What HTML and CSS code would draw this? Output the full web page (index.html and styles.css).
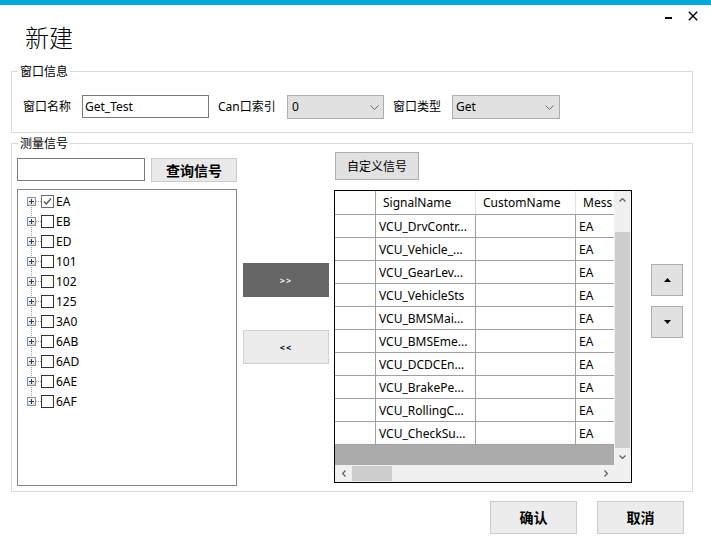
FILE: index.html
```html
<!DOCTYPE html>
<html lang="zh-CN">
<head>
<meta charset="utf-8">
<title>新建</title>
<link rel="stylesheet" href="styles.css">
</head>
<body>
<div class="window">
  <div class="accent"></div>
  <header class="titlebar">
    <h1 class="title">新建</h1>
    <div class="controls">
      <span class="min-btn"></span>
      <svg class="close-btn" width="10" height="10" viewBox="0 0 10 10"><path d="M0.8 0.8L9.2 9.2M9.2 0.8L0.8 9.2" stroke="#000" stroke-width="1.4" fill="none"/></svg>
    </div>
  </header>

  <fieldset class="group">
    <legend>窗口信息</legend>
    <div class="info-row">
      <span class="lbl lbl-name">窗口名称</span>
      <div class="textbox name-box">Get_Test</div>
      <span class="lbl lbl-can">Can口索引</span>
      <div class="combo combo-can"><span>0</span><svg class="chev" width="9" height="5" viewBox="0 0 9 5"><polyline points="0.5,0.5 4.5,4.5 8.5,0.5" fill="none" stroke="#6a6a6a" stroke-width="1"/></svg></div>
      <span class="lbl lbl-type">窗口类型</span>
      <div class="combo combo-type"><span>Get</span><svg class="chev" width="9" height="5" viewBox="0 0 9 5"><polyline points="0.5,0.5 4.5,4.5 8.5,0.5" fill="none" stroke="#6a6a6a" stroke-width="1"/></svg></div>
    </div>
  </fieldset>

  <fieldset class="group">
    <legend>测量信号</legend>
    <div class="sig-body">
      <div class="col-left">
        <div class="search-row">
          <div class="textbox search-box"></div>
          <button class="btn btn-query">查询信号</button>
        </div>
        <div class="tree">
          <div class="node"><span class="branch"><span class="exp"><svg width="5" height="5" viewBox="0 0 5 5"><path d="M0 2.5H5M2.5 0V5" stroke="#23407a" stroke-width="1"/></svg></span></span><span class="hline"></span><span class="chk on"><svg width="11" height="11" viewBox="0 0 11 11"><polyline points="2,5.5 4.3,8 9,2.5" fill="none" stroke="#555" stroke-width="1.3"/></svg></span><span class="node-label">EA</span></div>
          <div class="node"><span class="branch"><span class="exp"><svg width="5" height="5" viewBox="0 0 5 5"><path d="M0 2.5H5M2.5 0V5" stroke="#23407a" stroke-width="1"/></svg></span></span><span class="hline"></span><span class="chk"></span><span class="node-label">EB</span></div>
          <div class="node"><span class="branch"><span class="exp"><svg width="5" height="5" viewBox="0 0 5 5"><path d="M0 2.5H5M2.5 0V5" stroke="#23407a" stroke-width="1"/></svg></span></span><span class="hline"></span><span class="chk"></span><span class="node-label">ED</span></div>
          <div class="node"><span class="branch"><span class="exp"><svg width="5" height="5" viewBox="0 0 5 5"><path d="M0 2.5H5M2.5 0V5" stroke="#23407a" stroke-width="1"/></svg></span></span><span class="hline"></span><span class="chk"></span><span class="node-label">101</span></div>
          <div class="node"><span class="branch"><span class="exp"><svg width="5" height="5" viewBox="0 0 5 5"><path d="M0 2.5H5M2.5 0V5" stroke="#23407a" stroke-width="1"/></svg></span></span><span class="hline"></span><span class="chk"></span><span class="node-label">102</span></div>
          <div class="node"><span class="branch"><span class="exp"><svg width="5" height="5" viewBox="0 0 5 5"><path d="M0 2.5H5M2.5 0V5" stroke="#23407a" stroke-width="1"/></svg></span></span><span class="hline"></span><span class="chk"></span><span class="node-label">125</span></div>
          <div class="node"><span class="branch"><span class="exp"><svg width="5" height="5" viewBox="0 0 5 5"><path d="M0 2.5H5M2.5 0V5" stroke="#23407a" stroke-width="1"/></svg></span></span><span class="hline"></span><span class="chk"></span><span class="node-label">3A0</span></div>
          <div class="node"><span class="branch"><span class="exp"><svg width="5" height="5" viewBox="0 0 5 5"><path d="M0 2.5H5M2.5 0V5" stroke="#23407a" stroke-width="1"/></svg></span></span><span class="hline"></span><span class="chk"></span><span class="node-label">6AB</span></div>
          <div class="node"><span class="branch"><span class="exp"><svg width="5" height="5" viewBox="0 0 5 5"><path d="M0 2.5H5M2.5 0V5" stroke="#23407a" stroke-width="1"/></svg></span></span><span class="hline"></span><span class="chk"></span><span class="node-label">6AD</span></div>
          <div class="node"><span class="branch"><span class="exp"><svg width="5" height="5" viewBox="0 0 5 5"><path d="M0 2.5H5M2.5 0V5" stroke="#23407a" stroke-width="1"/></svg></span></span><span class="hline"></span><span class="chk"></span><span class="node-label">6AE</span></div>
          <div class="node"><span class="branch"><span class="exp"><svg width="5" height="5" viewBox="0 0 5 5"><path d="M0 2.5H5M2.5 0V5" stroke="#23407a" stroke-width="1"/></svg></span></span><span class="hline"></span><span class="chk"></span><span class="node-label">6AF</span></div>
        </div>
      </div>

      <div class="col-move">
        <button class="btn-move btn-add">&gt;&gt;</button>
        <button class="btn-move btn-remove">&lt;&lt;</button>
      </div>

      <div class="col-grid">
        <button class="btn btn-custom">自定义信号</button>
        <div class="grid">
          <div class="grid-view">
            <div class="g-row g-head"><div class="c c-rh"></div><div class="c c-sig">SignalName</div><div class="c c-cus">CustomName</div><div class="c c-msg">Mess</div></div>
            <div class="g-row"><div class="c c-rh"></div><div class="c c-sig">VCU_DrvContr...</div><div class="c c-cus"></div><div class="c c-msg">EA</div></div>
            <div class="g-row"><div class="c c-rh"></div><div class="c c-sig">VCU_Vehicle_...</div><div class="c c-cus"></div><div class="c c-msg">EA</div></div>
            <div class="g-row"><div class="c c-rh"></div><div class="c c-sig">VCU_GearLev...</div><div class="c c-cus"></div><div class="c c-msg">EA</div></div>
            <div class="g-row"><div class="c c-rh"></div><div class="c c-sig">VCU_VehicleSts</div><div class="c c-cus"></div><div class="c c-msg">EA</div></div>
            <div class="g-row"><div class="c c-rh"></div><div class="c c-sig">VCU_BMSMai...</div><div class="c c-cus"></div><div class="c c-msg">EA</div></div>
            <div class="g-row"><div class="c c-rh"></div><div class="c c-sig">VCU_BMSEme...</div><div class="c c-cus"></div><div class="c c-msg">EA</div></div>
            <div class="g-row"><div class="c c-rh"></div><div class="c c-sig">VCU_DCDCEn...</div><div class="c c-cus"></div><div class="c c-msg">EA</div></div>
            <div class="g-row"><div class="c c-rh"></div><div class="c c-sig">VCU_BrakePe...</div><div class="c c-cus"></div><div class="c c-msg">EA</div></div>
            <div class="g-row"><div class="c c-rh"></div><div class="c c-sig">VCU_RollingC...</div><div class="c c-cus"></div><div class="c c-msg">EA</div></div>
            <div class="g-row"><div class="c c-rh"></div><div class="c c-sig">VCU_CheckSu...</div><div class="c c-cus"></div><div class="c c-msg">EA</div></div>
          </div>
          <div class="vscroll">
            <div class="sb-arrow"><svg width="7" height="4" viewBox="0 0 7 4"><polyline points="0.5,3.5 3.5,0.6 6.5,3.5" fill="none" stroke="#606060" stroke-width="1.3"/></svg></div>
            <div class="v-thumb"></div>
            <div class="sb-arrow"><svg width="7" height="4" viewBox="0 0 7 4"><polyline points="0.5,0.5 3.5,3.4 6.5,0.5" fill="none" stroke="#606060" stroke-width="1.3"/></svg></div>
          </div>
          <div class="hscroll">
            <div class="sb-arrow h-arrow"><svg width="4" height="7" viewBox="0 0 4 7"><polyline points="3.5,0.5 0.6,3.5 3.5,6.5" fill="none" stroke="#606060" stroke-width="1.3"/></svg></div>
            <div class="h-thumb"></div>
            <div class="sb-arrow h-arrow h-right"><svg width="4" height="7" viewBox="0 0 4 7"><polyline points="0.5,0.5 3.4,3.5 0.5,6.5" fill="none" stroke="#606060" stroke-width="1.3"/></svg></div>
          </div>
          <div class="corner"></div>
        </div>
      </div>

      <div class="col-order">
        <button class="btn-order"><svg width="7" height="4" viewBox="0 0 7 4"><polygon points="0,4 3.5,0 7,4" fill="#000"/></svg></button>
        <button class="btn-order down"><svg width="7" height="4" viewBox="0 0 7 4"><polygon points="0,0 7,0 3.5,4" fill="#000"/></svg></button>
      </div>
    </div>
  </fieldset>

  <footer class="footer">
    <button class="btn-foot">确认</button>
    <button class="btn-foot">取消</button>
  </footer>
</div>
</body>
</html>
```

FILE: styles.css
```css
* { box-sizing: border-box; }
html, body { margin: 0; padding: 0; background: #fff; }
body {
  width: 711px;
  height: 548px;
  overflow: hidden;
  font-family: "Noto Sans", "Noto Sans CJK SC", sans-serif;
  font-size: 12px;
  color: #000;
}

.accent { height: 5px; background: #00aadc; }

.titlebar {
  display: flex;
  justify-content: space-between;
  align-items: flex-start;
  height: 58px;
}
.title {
  margin: 16px 0 0 25px;
  font-family: "Noto Sans CJK SC", sans-serif;
  font-weight: 300;
  font-size: 24px;
  line-height: 32px;
}
.controls { display: flex; align-items: flex-start; margin-right: 13px; }
.min-btn { width: 7px; height: 2px; background: #000; margin-top: 12px; }
.close-btn { display: block; margin: 6px 0 0 16px; }

/* group boxes */
.group {
  width: 682px;
  margin: 0 0 0 11px;
  padding: 0;
  border: 1px solid #dcdcdc;
  min-inline-size: 0;
}
.group + .group { margin-top: 2px; }
.group legend {
  margin-left: 6px;
  padding: 0 2px;
  font-family: "Noto Sans CJK SC", sans-serif;
  font-size: 12px;
  line-height: 16px;
}

.info-row {
  display: flex;
  align-items: flex-start;
  padding: 16px 0 13px 11px;
}
.lbl { line-height: 24px; white-space: nowrap; }
.lbl-name { width: 59px; }
.lbl-can { width: 69px; margin-left: 9px; }
.lbl-type { width: 59px; margin-left: 9px; }

.textbox {
  height: 23px;
  border: 1px solid #7a7a7a;
  background: #fff;
  padding-left: 2px;
  line-height: 21px;
}
.name-box { width: 127px; }

.combo {
  height: 24px;
  background: #e1e1e1;
  border: 1px solid #adadad;
  display: flex;
  align-items: center;
  justify-content: space-between;
  padding: 0 4px 0 4px;
  line-height: 22px;
}
.combo-can { width: 97px; }
.combo-type { width: 108px; padding-left: 3px; padding-right: 5px; }
.chev { display: block; }

/* signals */
.sig-body {
  display: flex;
  align-items: flex-start;
  padding: 0 0 5px 5px;
}
.col-left { width: 220px; margin-top: 7px; }
.search-row { display: flex; align-items: flex-start; }
.search-box { width: 128px; }

.btn {
  font-family: "Noto Sans CJK SC", sans-serif;
  color: #000;
  margin: 0;
  padding: 0;
}
.btn-query {
  width: 86px;
  height: 24px;
  margin-left: 6px;
  background: #e9e9e9;
  border: 1px solid #cccccc;
  font-size: 14px;
  font-weight: 700;
  line-height: 22px;
}

.tree {
  margin-top: 7px;
  height: 297px;
  border: 1px solid #828790;
  background: #fff;
  padding-top: 1px;
}
.node {
  display: flex;
  align-items: center;
  height: 20px;
  padding-left: 9px;
}
.branch {
  width: 9px;
  height: 20px;
  display: flex;
  align-items: center;
  background: repeating-linear-gradient(to bottom, #a0a0a0 0 1px, transparent 1px 2px) 4px 0 / 1px 20px no-repeat;
}
.node:first-child .branch { background-position: 4px 10px; background-size: 1px 10px; }
.node:last-child .branch { background-size: 1px 10px; }
.exp {
  width: 9px;
  height: 9px;
  border: 1px solid #919191;
  background: linear-gradient(#fdfdfd, #dcdcdc);
  display: flex;
  align-items: center;
  justify-content: center;
}
.exp svg { display: block; }
.hline {
  width: 5px;
  height: 1px;
  background: repeating-linear-gradient(to right, #a0a0a0 0 1px, transparent 1px 2px);
}
.chk {
  width: 13px;
  height: 13px;
  flex: none;
  border: 1px solid #333;
  background: #fff;
  display: flex;
  align-items: center;
  justify-content: center;
}
.chk.on { border-color: #6a6a6a; }
.chk svg { display: block; }
.node-label { margin-left: 2px; line-height: 21px; }

/* move buttons */
.col-move {
  width: 86px;
  margin: 112px 0 0 6px;
  display: flex;
  flex-direction: column;
}
.btn-move {
  height: 34px;
  margin: 0;
  padding: 0;
  border: 0;
  font-family: "Noto Sans", sans-serif;
  font-size: 9px;
  font-weight: 700;
  letter-spacing: 1px;
}
.btn-add { background: #666666; color: #f2f2f2; }
.btn-remove { margin-top: 33px; background: #ececec; border: 1px solid #d0d0d0; color: #000; }

/* grid */
.col-grid { width: 298px; margin-left: 5px; }
.btn-custom {
  display: block;
  width: 84px;
  height: 28px;
  margin: 1px 0 0 1px;
  background: #e1e1e1;
  border: 1px solid #adadad;
  font-size: 12px;
  line-height: 26px;
}
.grid {
  margin-top: 10px;
  height: 293px;
  border: 1px solid #000;
  display: grid;
  grid-template-columns: 279px 17px;
  grid-template-rows: 274px 17px;
  background: #f0f0f0;
}
.grid-view { background: #ababab; overflow: hidden; }
.g-row {
  display: flex;
  height: 23px;
  background: #fff;
  border-bottom: 1px solid #a0a0a0;
}
.g-head { height: 24px; }
.c {
  flex: none;
  overflow: hidden;
  white-space: nowrap;
  padding-left: 3px;
  line-height: 24px;
  border-right: 1px solid #a0a0a0;
}
.c-rh { width: 41px; }
.c-sig, .c-cus { width: 100px; }
.c-msg { width: 60px; border-right: 0; }
.g-head .c { padding-left: 7px; line-height: 24px; border-right-color: #e3e3e3; }
.g-head .c-rh { border-right-color: #a0a0a0; }
.g-head .c-msg { padding-left: 7px; }

.vscroll { display: flex; flex-direction: column; background: #f0f0f0; }
.sb-arrow {
  flex: none;
  height: 17px;
  display: flex;
  align-items: center;
  justify-content: center;
}
.sb-arrow svg { display: block; }
.v-thumb { margin: 24px 0 0 1px; width: 15px; height: 216px; background: #cdcdcd; }
.hscroll { display: flex; align-items: center; background: #f0f0f0; }
.h-arrow { width: 17px; }
.h-thumb { width: 40px; height: 15px; background: #cdcdcd; }
.h-right { margin-left: auto; }
.corner { background: #f0f0f0; }

/* order buttons */
.col-order {
  width: 32px;
  margin: 113px 0 0 19px;
  display: flex;
  flex-direction: column;
}
.btn-order {
  height: 32px;
  margin: 0;
  padding: 0;
  background: #e1e1e1;
  border: 1px solid #adadad;
  display: flex;
  align-items: center;
  justify-content: center;
}
.btn-order svg { display: block; }
.btn-order.down { margin-top: 10px; }

/* footer */
.footer {
  display: flex;
  justify-content: flex-end;
  gap: 20px;
  margin-top: 9px;
  padding-right: 27px;
}
.btn-foot {
  width: 87px;
  height: 33px;
  margin: 0;
  padding: 0;
  background: #ececec;
  border: 1px solid #cccccc;
  font-family: "Noto Sans CJK SC", sans-serif;
  font-size: 14px;
  font-weight: 700;
  line-height: 31px;
  color: #000;
}
```
